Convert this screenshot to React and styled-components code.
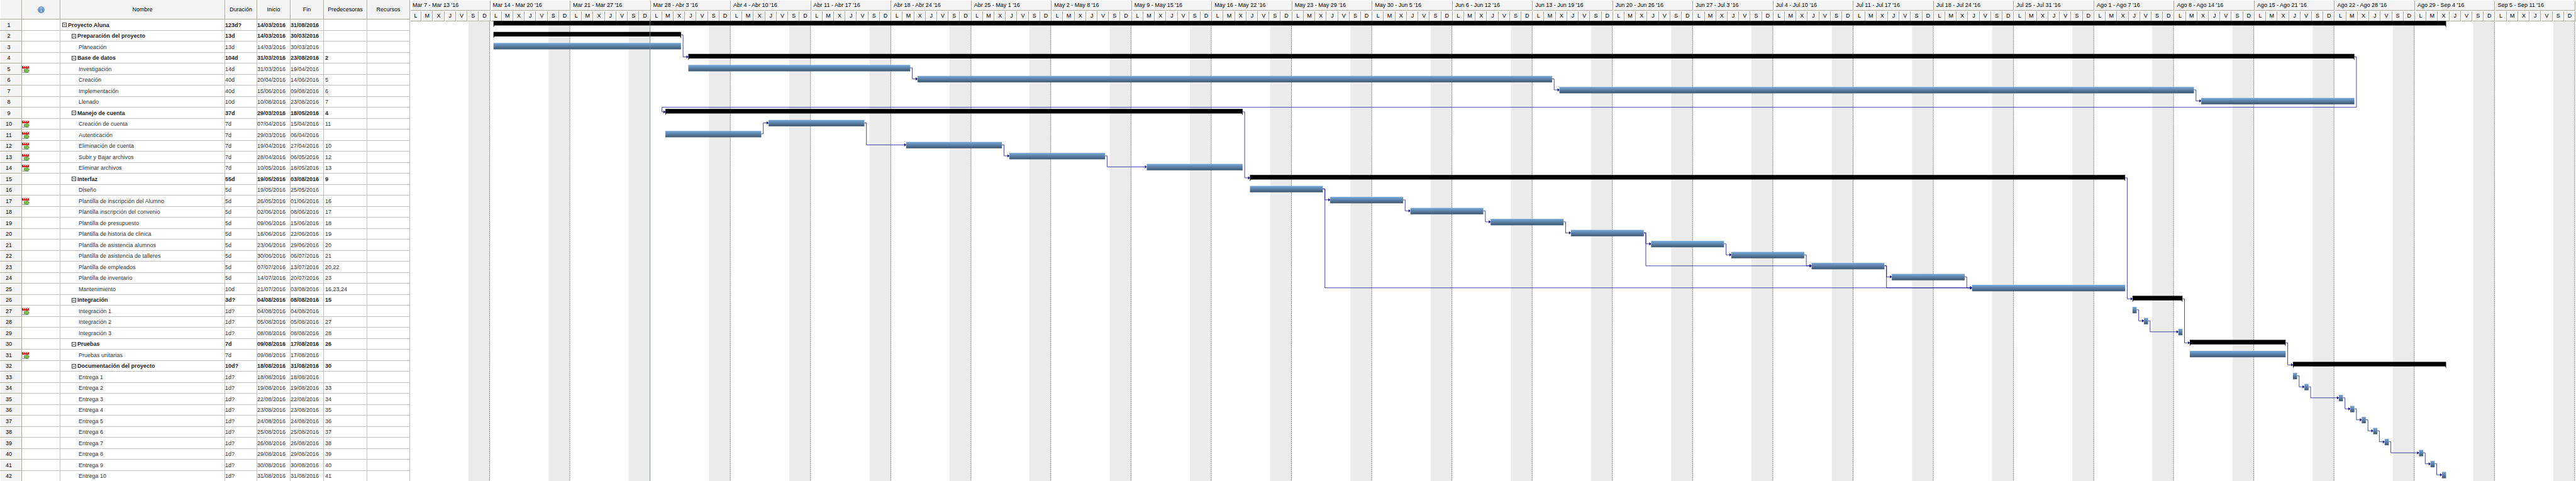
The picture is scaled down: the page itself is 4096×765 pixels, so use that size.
import React from 'react';
import styled, { createGlobalStyle, css } from 'styled-components';

const GlobalStyle = createGlobalStyle`
  * { box-sizing: border-box; }
  body {
    margin: 0;
    background: #fff;
    color: #000;
    font-family: "Liberation Sans", Arial, sans-serif;
    font-size: 9px;
    line-height: 12px;
  }
`;

/* ---------- data ---------- */

// [name, level, duration, start, finish, predecessors, has calendar constraint]
const TASKS = [
  ['Proyecto Aluna', 1, '123d?', '14/03/2016', '31/08/2016', ''],
  ['Preparación del proyecto', 2, '13d', '14/03/2016', '30/03/2016', ''],
  ['Planeación', 3, '13d', '14/03/2016', '30/03/2016', ''],
  ['Base de datos', 2, '104d', '31/03/2016', '23/08/2016', '2'],
  ['Investigación', 3, '14d', '31/03/2016', '19/04/2016', '', true],
  ['Creación', 3, '40d', '20/04/2016', '14/06/2016', '5'],
  ['Implementación', 3, '40d', '15/06/2016', '09/08/2016', '6'],
  ['Llenado', 3, '10d', '10/08/2016', '23/08/2016', '7'],
  ['Manejo de cuenta', 2, '37d', '29/03/2016', '18/05/2016', '4'],
  ['Creación de cuenta', 3, '7d', '07/04/2016', '15/04/2016', '11', true],
  ['Autenticación', 3, '7d', '29/03/2016', '06/04/2016', '', true],
  ['Eliminación de cuenta', 3, '7d', '19/04/2016', '27/04/2016', '10', true],
  ['Subir y Bajar archivos', 3, '7d', '28/04/2016', '06/05/2016', '12', true],
  ['Eliminar archivos', 3, '7d', '10/05/2016', '18/05/2016', '13', true],
  ['Interfaz', 2, '55d', '19/05/2016', '03/08/2016', '9'],
  ['Diseño', 3, '5d', '19/05/2016', '25/05/2016', ''],
  ['Plantilla de inscripción del Alumno', 3, '5d', '26/05/2016', '01/06/2016', '16', true],
  ['Plantilla inscripción del convenio', 3, '5d', '02/06/2016', '08/06/2016', '17'],
  ['Plantilla de presupuesto', 3, '5d', '09/06/2016', '15/06/2016', '18'],
  ['Plantilla de historia de clinica', 3, '5d', '16/06/2016', '22/06/2016', '19'],
  ['Plantilla de asistencia alumnos', 3, '5d', '23/06/2016', '29/06/2016', '20'],
  ['Plantilla de asistencia de talleres', 3, '5d', '30/06/2016', '06/07/2016', '21'],
  ['Plantilla de empleados', 3, '5d', '07/07/2016', '13/07/2016', '20,22'],
  ['Plantilla de inventario', 3, '5d', '14/07/2016', '20/07/2016', '23'],
  ['Mantenimiento', 3, '10d', '21/07/2016', '03/08/2016', '16,23,24'],
  ['Integración', 2, '3d?', '04/08/2016', '08/08/2016', '15'],
  ['Integración 1', 3, '1d?', '04/08/2016', '04/08/2016', '', true],
  ['Integración 2', 3, '1d?', '05/08/2016', '05/08/2016', '27'],
  ['Integración 3', 3, '1d?', '08/08/2016', '08/08/2016', '28'],
  ['Pruebas', 2, '7d', '09/08/2016', '17/08/2016', '26'],
  ['Pruebas unitarias', 3, '7d', '09/08/2016', '17/08/2016', '', true],
  ['Documentación del proyecto', 2, '10d?', '18/08/2016', '31/08/2016', '30'],
  ['Entrega 1', 3, '1d?', '18/08/2016', '18/08/2016', ''],
  ['Entrega 2', 3, '1d?', '19/08/2016', '19/08/2016', '33'],
  ['Entrega 3', 3, '1d?', '22/08/2016', '22/08/2016', '34'],
  ['Entrega 4', 3, '1d?', '23/08/2016', '23/08/2016', '35'],
  ['Entrega 5', 3, '1d?', '24/08/2016', '24/08/2016', '36'],
  ['Entrega 6', 3, '1d?', '25/08/2016', '25/08/2016', '37'],
  ['Entrega 7', 3, '1d?', '26/08/2016', '26/08/2016', '38'],
  ['Entrega 8', 3, '1d?', '29/08/2016', '29/08/2016', '39'],
  ['Entrega 9', 3, '1d?', '30/08/2016', '30/08/2016', '40'],
  ['Entrega 10', 3, '1d?', '31/08/2016', '31/08/2016', '41'],
].map(([name, level, duration, start, end, preds, flagged]) => ({
  name, level, duration, start, end, preds, flagged,
}));

const MONTHS = ['Ene', 'Feb', 'Mar', 'Abr', 'May', 'Jun', 'Jul', 'Ago', 'Sep', 'Oct', 'Nov', 'Dic'];
const DAYS = ['L', 'M', 'X', 'J', 'V', 'S', 'D'];
const DAY_MS = 86400000;
const ORIGIN = Date.UTC(2016, 2, 7);
const WEEK_COUNT = 27;

const label = (t) => {
  const d = new Date(t);
  return `${MONTHS[d.getUTCMonth()]} ${d.getUTCDate()}`;
};
const WEEKS = Array.from({ length: WEEK_COUNT }, (_, i) => {
  const monday = ORIGIN + i * 7 * DAY_MS;
  return `${label(monday)} - ${label(monday + 6 * DAY_MS)} '16`;
});

const dayIndex = (text) => {
  const [d, m, y] = text.split('/').map(Number);
  return (Date.UTC(y, m - 1, d) - ORIGIN) / DAY_MS;
};

/* ---------- layout ---------- */

const Page = styled.main`
  display: flex;
  align-items: flex-start;
  height: 100vh;
  overflow: hidden;
`;

const TaskTable = styled.table`
  flex: none;
  width: 652px;
  table-layout: fixed;
  border-collapse: separate;
  border-spacing: 0;
`;

const Col = styled.col`
  width: ${(p) => p.$w}px;
`;

const HeadCell = styled.th`
  height: 31px;
  padding: 0;
  background: #f4f4f4;
  border-right: 1px solid #aca899;
  border-bottom: 1px solid #aca899;
  box-shadow: inset 1px 0 #fff;
  font-weight: normal;
  text-align: center;
  vertical-align: middle;

  svg { display: block; margin: 0 auto; }
`;

const Row = styled.tr`
  height: 17px;
  color: #333;
  &:nth-child(odd) { height: 18px; }
  ${(p) => p.$summary && css`
    font-weight: bold;
    color: #222;
  `}
`;

const NumberCell = styled.th`
  padding: 0 6px 0 0;
  background: #f4f4f4;
  border-right: 1px solid #aca899;
  border-bottom: 1px solid #aca899;
  box-shadow: inset 1px 1px #fff;
  color: #000;
  font-weight: normal;
  text-align: center;
`;

const Cell = styled.td`
  padding: 0 0 0 ${(p) => p.$indent || 0}px;
  border-right: 1px solid #c0c0c0;
  border-bottom: 1px solid #c0c0c0;
  white-space: nowrap;

  svg { display: block; }
`;

const INDENT = { 1: 3, 2: 18, 3: 29 };

const NameLine = styled.span`
  display: flex;
  align-items: center;
  gap: 2px;
`;

const Toggle = styled.button`
  display: block;
  width: 7px;
  height: 7px;
  padding: 0;
  border: 1px solid #444;
  background: linear-gradient(#444, #444) center / 3px 1px no-repeat #fff;
`;

const Timeline = styled.section`
  flex: 1;
  min-width: 0;
  padding: 1px 1px 0 0;
`;

const Weeks = styled.div`
  display: grid;
  grid-template-columns: repeat(${WEEK_COUNT}, 1fr);
  margin-bottom: 0;
`;

const Week = styled.div`
  display: grid;
  grid-template-columns: repeat(7, 1fr);
  grid-template-rows: 16px 16px;
  row-gap: 1px;
`;

const headerBox = css`
  margin-left: 1px;
  background: #f4f4f4;
  border-right: 1px solid #aca899;
  border-bottom: 1px solid #aca899;
  line-height: 15px;
  white-space: nowrap;
`;

const WeekLabel = styled.div`
  ${headerBox}
  grid-column: 1 / -1;
  padding-left: 3px;
`;

const DayLabel = styled.div`
  ${headerBox}
  text-align: center;
`;

const Chart = styled.svg`
  display: block;
  width: 100%;
  height: 731px;
  overflow: visible;
`;

/* ---------- icons ---------- */

const InfoIcon = () => (
  <svg width="11" height="11" viewBox="0 0 16 16" role="img" aria-label="Indicadores">
    <defs>
      <linearGradient id="info" x1="0" y1="0" x2="0" y2="1">
        <stop offset="0" stopColor="#86b2e0" />
        <stop offset="1" stopColor="#3c74b8" />
      </linearGradient>
    </defs>
    <circle cx="8" cy="8" r="7.2" fill="url(#info)" stroke="#3f6ea8" />
    <circle cx="8" cy="8" r="6" fill="none" stroke="#a9c9ea" strokeWidth=".8" />
    <circle cx="8" cy="4.7" r="1.2" fill="#fff" />
    <path d="M6.3 6.8h2.6v4.2h1v1.2H6.3V11h1V8h-1z" fill="#fff" />
  </svg>
);

const CalendarIcon = () => (
  <svg width="12" height="12" viewBox="0 0 16 16" role="img" aria-label="Restricción de fecha">
    <rect x=".5" y="5" width="14" height="10.5" fill="#f2f2f2" stroke="#c4c4c4" />
    <path d="M1 15h13" stroke="#888" />
    <rect x="0" y="1.5" width="15" height="5" fill="#dc0f0f" />
    <path d="M3.5 0v4M7.5 0v4M11.5 0v4" stroke="#fff" strokeWidth="2" />
    <path d="M3.5 0v3.4M7.5 0v3.4M11.5 0v3.4" stroke="#b5a0a0" strokeWidth=".8" />
    <path d="M4.8 8.5h5V6l5.7 5-5.7 5v-2.5h-5z" fill="#7cc04e" stroke="#3b7d1f" strokeWidth=".9" />
  </svg>
);

/* ---------- chart ---------- */

const CHART_W = 4723;
const CHART_H = 1003;
const WEEK_W = CHART_W / WEEK_COUNT;
const DAY_W = 25;
const ROW_H = 24;

const startX = (task) => dayIndex(task.start) * DAY_W + 7;
const endX = (task) => dayIndex(task.end) * DAY_W + 16;
const linkY = (i) => 5.5 + i * ROW_H;

const Bar = ({ task, index }) => {
  const x = startX(task);
  const end = endX(task);
  const y = index * ROW_H - 1;
  if (task.level === 3) {
    return <rect x={x} y={y} width={end - x} height="14" fill="url(#task)" />;
  }
  return <path d={`M${x} ${y}H${end}V${y + 14}L${end - 2} ${y + 10}H${x + 2}L${x} ${y + 14}Z`} />;
};

const Link = ({ from, to }) => {
  const x1 = endX(TASKS[from]);
  const x2 = startX(TASKS[to]);
  const y1 = linkY(from);
  const y2 = linkY(to);
  const route = x2 > x1
    ? `M${x1} ${y1}H${x1 + 4.5}V${y2}H${x2}`
    : `M${x1} ${y1}H${x1 + 4.5}V${y2 - 10}H${x2 - 7.5}V${y2}H${x2}`;
  return (
    <g>
      <path d={route} fill="none" stroke="#00008b" />
      <path d={`M${x2 - 4} ${y2 - 3.5}L${x2} ${y2}L${x2 - 4} ${y2 + 3.5}Z`} fill="#00008b" />
    </g>
  );
};

const LINKS = TASKS.flatMap((task, to) =>
  task.preds ? task.preds.split(',').map((n) => ({ from: Number(n) - 1, to })) : []
);

const GanttChart = () => (
  <Chart viewBox={`0 0 ${CHART_W} ${CHART_H}`} preserveAspectRatio="none" role="img" aria-label="Diagrama de Gantt">
    <defs>
      <linearGradient id="task" x1="0" y1="0" x2="0" y2="1">
        <stop offset="0" stopColor="#78aadb" />
        <stop offset="1" stopColor="#3d5670" />
      </linearGradient>
    </defs>
    {WEEKS.map((week, i) => {
      const x = Math.round(i * WEEK_W);
      return (
        <g key={week}>
          <rect x={x + 127} y="1" width="46" height={CHART_H} fill="#ebebeb" />
          {i === 2
            ? <path d={`M${x + 173.5} -5V${CHART_H}`} stroke="#5b9bd5" />
            : <path d={`M${x + 173.5} 1V${CHART_H}`} stroke="#000" strokeDasharray="1 1" />}
        </g>
      );
    })}
    {LINKS.map((l) => <Link key={`${l.from}-${l.to}`} {...l} />)}
    {TASKS.map((t, i) => <Bar key={t.name} task={t} index={i} />)}
    <path d={`M${Math.round(2 * WEEK_W) + 173.5} -5V${CHART_H}`} stroke="#5b9bd5" />
  </Chart>
);

/* ---------- page ---------- */

const COLUMNS = [35, 61, 262, 51, 53, 53, 69, 68];

export default function App() {
  return (
    <>
      <GlobalStyle />
      <Page>
        <TaskTable>
          <colgroup>
            {COLUMNS.map((w, i) => <Col key={i} $w={w} />)}
          </colgroup>
          <thead>
            <tr>
              <HeadCell />
              <HeadCell scope="col"><InfoIcon /></HeadCell>
              <HeadCell scope="col">Nombre</HeadCell>
              <HeadCell scope="col">Duración</HeadCell>
              <HeadCell scope="col">Inicio</HeadCell>
              <HeadCell scope="col">Fin</HeadCell>
              <HeadCell scope="col">Predecesoras</HeadCell>
              <HeadCell scope="col">Recursos</HeadCell>
            </tr>
          </thead>
          <tbody>
            {TASKS.map((t, i) => (
              <Row key={t.name} $summary={t.level < 3}>
                <NumberCell scope="row">{i + 1}</NumberCell>
                <Cell>{t.flagged && <CalendarIcon />}</Cell>
                <Cell $indent={INDENT[t.level]}>
                  <NameLine>
                    {t.level < 3 && <Toggle type="button" aria-label={`Contraer ${t.name}`} />}
                    {t.name}
                  </NameLine>
                </Cell>
                <Cell>{t.duration}</Cell>
                <Cell>{t.start}</Cell>
                <Cell>{t.end}</Cell>
                <Cell $indent={2}>{t.preds}</Cell>
                <Cell />
              </Row>
            ))}
          </tbody>
        </TaskTable>
        <Timeline>
          <Weeks>
            {WEEKS.map((week) => (
              <Week key={week}>
                <WeekLabel>{week}</WeekLabel>
                {DAYS.map((d) => <DayLabel key={d}>{d}</DayLabel>)}
              </Week>
            ))}
          </Weeks>
          <GanttChart />
        </Timeline>
      </Page>
    </>
  );
}
